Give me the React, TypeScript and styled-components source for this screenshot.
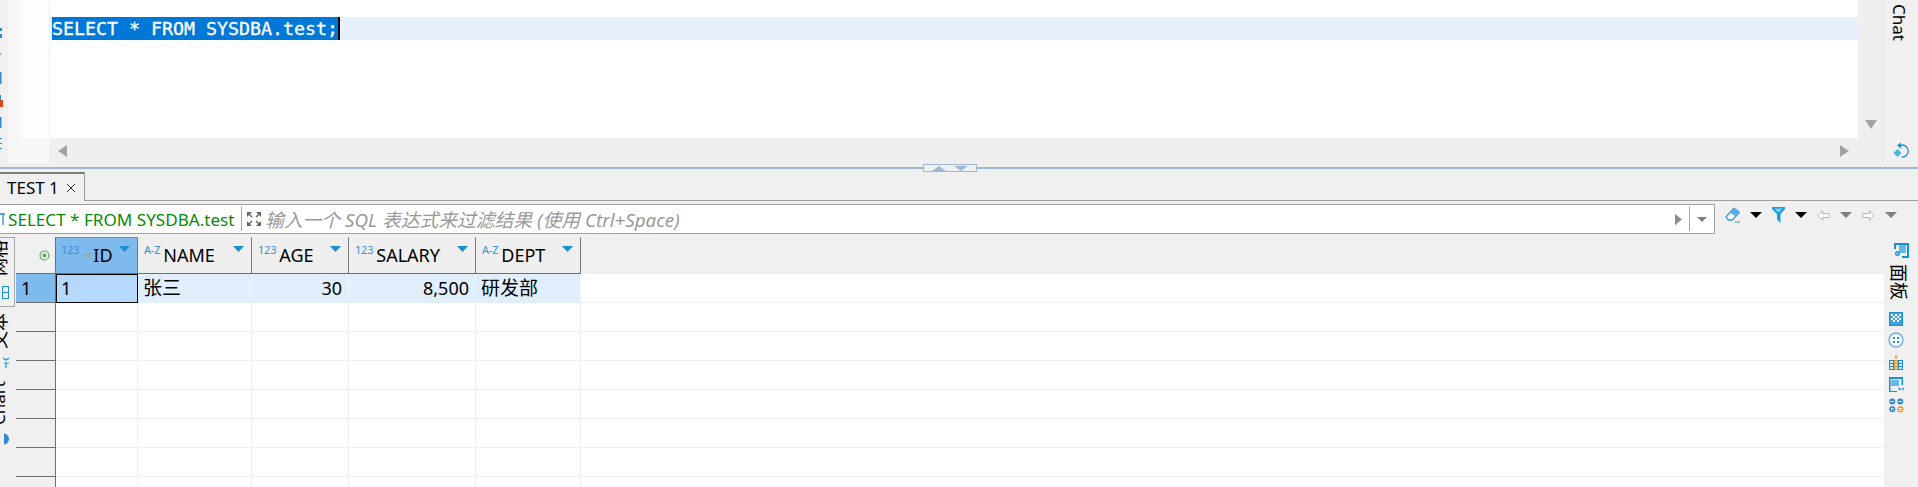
import styled, { createGlobalStyle } from 'styled-components'

const UI_FONT = '"Noto Sans", "Noto Sans CJK SC", sans-serif'
const BLUE = '#1a8fd6'
const GRAY_TRI = '#7f7f7f'

const columns = [
  { name: 'ID', width: 82, kind: '123', value: '1', right: false, cjk: false },
  { name: 'NAME', width: 114, kind: 'A-Z', value: '张三', right: false, cjk: true },
  { name: 'AGE', width: 97, kind: '123', value: '30', right: true, cjk: false },
  { name: 'SALARY', width: 127, kind: '123', value: '8,500', right: true, cjk: false },
  { name: 'DEPT', width: 105, kind: 'A-Z', value: '研发部', right: false, cjk: true },
]

const Global = createGlobalStyle`
  html, body {
    margin: 0;
    background: #f0f0f0;
  }
  * {
    box-sizing: border-box;
  }
`

const Page = styled.div`
  width: 1918px;
  height: 487px;
  overflow: hidden;
  display: flex;
  flex-direction: column;
  background: #f0f0f0;
  color: #000;
  font-family: ${UI_FONT};
`

const EditorPane = styled.section`
  height: 167px;
  display: flex;
`

const EditorEdge = styled.div`
  width: 8px;
  flex: none;
`

const EditorMain = styled.div`
  flex: 1;
  height: 163px;
  display: grid;
  grid-template-columns: 42px 1fr 26px;
  grid-template-rows: 138px 25px;
  background: #f7f7f7;
`

const Gutter = styled.div`
  margin-left: 12px;
  background: #fdfdfd;
  border-right: 1px solid #f0f0f0;
`

const EditorText = styled.div`
  background: #fff;
  padding-top: 17px;
  overflow: hidden;
`

const ActiveLine = styled.div`
  height: 23px;
  background: #e6f1fd;
  display: flex;
  align-items: stretch;
  padding-left: 2px;
`

const Selection = styled.span`
  width: 286px;
  background: #0078d7;
  color: #fff;
  font-family: 'DejaVu Sans Mono', monospace;
  font-size: 18.27px;
  line-height: 23px;
  white-space: pre;
  -webkit-text-stroke: 0.3px #fff;
`

const Caret = styled.span`
  width: 2px;
  background: #000;
`

const ScrollV = styled.div`
  grid-row: 1 / 3;
  grid-column: 3;
  background: #efefef;
  display: flex;
  justify-content: center;
  padding-top: 120px;
  border-right: 1px solid #e6e6e6;
`

const ScrollH = styled.div`
  grid-column: 2;
  grid-row: 2;
  background: #efefef;
  display: flex;
  justify-content: space-between;
  align-items: center;
  padding: 0 9px 0 8px;
`

const GutterFoot = styled.div`
  grid-column: 1;
  grid-row: 2;
`

const ChatRail = styled.aside`
  width: 34px;
  flex: none;
  height: 163px;
  display: flex;
  flex-direction: column;
  align-items: center;
  justify-content: space-between;
  padding: 4px 0 3px;
`

const SideLabel = styled.span<{ $size?: number }>`
  writing-mode: vertical-rl;
  text-orientation: sideways;
  font-size: ${({ $size }) => $size ?? 18}px;
  line-height: 20px;
  white-space: nowrap;
`

// the left tabs read bottom to top, the right ones top to bottom
const LeftLabel = styled(SideLabel)`
  transform: rotate(180deg);
`

const ChatLabel = styled(SideLabel)`
  margin-right: 5px;
`

const PanelLabel = styled(SideLabel)`
  margin-bottom: 6px;
`

const Sash = styled.div`
  height: 2px;
  flex: none;
  display: flex;
  align-items: center;
  background: #9fb9d4;
  justify-content: center;
  padding-right: 18px;
`

const SashGrip = styled.div`
  width: 54px;
  height: 8px;
  background: #f0f0f0;
  border: 1px solid #9fb9d4;
  display: flex;
  align-items: center;
  justify-content: center;
  gap: 8px;
`

const TabStrip = styled.div`
  height: 32px;
  flex: none;
  padding-top: 3px;
  border-bottom: 1px solid #a0a0a0;
  display: flex;
`

const Tab = styled.div`
  width: 85px;
  height: 29px;
  border-top: 2px solid #7d7d7d;
  border-right: 1px solid #a0a0a0;
  background: #f0f0f0;
  display: flex;
  align-items: center;
  padding-left: 7px;
  gap: 7px;
  font-size: 17px;
`

const FilterRow = styled.div`
  height: 36px;
  flex: none;
  display: flex;
  align-items: flex-start;
  padding-top: 3px;
`

const FilterBox = styled.div`
  width: 1715px;
  height: 30px;
  flex: none;
  display: flex;
  align-items: center;
  background: #fff;
  border: 1px solid #a0a0a0;
  border-left: none;
`

const QueryLabel = styled.span`
  flex: none;
  width: 233px;
  color: #0a8a0a;
  font-size: 17.1px;
  white-space: nowrap;
`

const Divider = styled.span`
  width: 1px;
  height: 24px;
  background: #a6a6a6;
  flex: none;
`

const Placeholder = styled.span`
  flex: 1;
  padding-left: 3px;
  color: #9a9a9a;
  font-size: 18.8px;
  font-style: italic;
  white-space: nowrap;
`

const FilterEnd = styled.div`
  flex: none;
  display: flex;
  align-items: center;
  gap: 7px;
  padding: 0 7px 0 0;
`

const Toolbar = styled.div`
  display: flex;
  align-items: center;
  gap: 10px;
  padding: 3px 0 0 10px;
`

const Results = styled.div`
  flex: 1;
  min-height: 0;
  display: flex;
`

const LeftRail = styled.aside`
  width: 16px;
  flex: none;
  display: flex;
  flex-direction: column;
  overflow: hidden;
`

const RailGroup = styled.div`
  width: 15px;
  height: 70px;
  flex: none;
  border: 1px solid #a8a8a8;
  border-left: none;
  display: flex;
  flex-direction: column;
  align-items: flex-end;
  overflow: hidden;
  padding: 2px 5px 0 0;
  margin-bottom: 6px;
`

const RailItem = styled.div<{ $top?: number }>`
  display: flex;
  justify-content: flex-end;
  width: 15px;
  padding-right: 6px;
  margin-top: ${({ $top }) => $top ?? 0}px;
  overflow: hidden;
  flex: none;
`

const Grid = styled.div`
  flex: 1;
  display: flex;
  flex-direction: column;
  min-width: 0;
`

const HeaderRow = styled.div`
  height: 37px;
  flex: none;
  display: flex;
`

const BodyRow = styled.div`
  height: 29px;
  flex: none;
  display: flex;
  background: #fff;
`

const CornerCell = styled.div`
  width: 40px;
  flex: none;
  display: flex;
  align-items: center;
  justify-content: flex-end;
  padding-right: 5px;
  border-right: 1px solid #6f6f6f;
  border-bottom: 1px solid #6f6f6f;
`

const RowHead = styled.div<{ $active?: boolean }>`
  width: 40px;
  flex: none;
  padding-left: 5px;
  font-size: 18px;
  line-height: 28px;
  background: ${({ $active }) => ($active ? '#7fbaec' : '#f0f0f0')};
  border-right: 1px solid #6f6f6f;
  border-bottom: 1px solid #6f6f6f;
`

const HeadCell = styled.div<{ $selected?: boolean }>`
  position: relative;
  height: 37px;
  flex: none;
  display: flex;
  align-items: center;
  padding-left: ${({ $selected }) => ($selected ? '5px' : '6px')};
  background: ${({ $selected }) => ($selected ? '#7fbaec' : '#efefef')};
  border-top: 1px solid ${({ $selected }) => ($selected ? '#8a8a8a' : 'transparent')};
  border-right: 1px solid #777;
  border-bottom: 1px solid #6f6f6f;
`

const TypeTag = styled.span`
  font-size: 11px;
  line-height: 10px;
  color: #3c8fd4;
  align-self: flex-start;
  margin-top: 7px;
  margin-right: 3px;
  letter-spacing: -0.2px;
`

const ColumnName = styled.span`
  font-size: 18px;
  margin-top: -2px;
`

const SortMark = styled.svg`
  position: absolute;
  top: 8px;
  right: 7px;
`

const HeadFill = styled.div`
  flex: 1;
`

const Cell = styled.div<{ $active?: boolean; $focused?: boolean; $right?: boolean; $cjk?: boolean }>`
  flex: none;
  font-size: ${({ $cjk }) => ($cjk ? '19px' : '18px')};
  line-height: 28px;
  padding: 0 ${({ $right }) => ($right ? '6px' : '0')} 0 5px;
  text-align: ${({ $right }) => ($right ? 'right' : 'left')};
  background: ${({ $active, $focused }) => ($focused ? '#b5d8fb' : $active ? '#e1effd' : '#fff')};
  border-right: 1px solid ${({ $active }) => ($active ? '#ecf4fd' : '#f0f0f0')};
  border-bottom: 1px solid ${({ $active }) => ($active ? '#e1effd' : '#f0f0f0')};
  outline: ${({ $focused }) => ($focused ? '1px solid #000' : 'none')};
  outline-offset: -1px;
`

const RowFill = styled.div`
  flex: 1;
  border-bottom: 1px solid #f0f0f0;
`

const RightRail = styled.aside`
  width: 34px;
  flex: none;
  display: flex;
  flex-direction: column;
  align-items: flex-start;
  padding: 6px 0 0 5px;
  gap: 6px;
`

const RailIcon = styled.div<{ $left?: number }>`
  display: flex;
  margin-left: ${({ $left }) => $left ?? 0}px;
`

function Tri({ color = '#000', w = 12, h = 6 }: { color?: string; w?: number; h?: number }) {
  return (
    <svg width={w} height={h} viewBox="0 0 11 6" preserveAspectRatio="none">
      <path d="M0 0h11L5.500 6z" fill={color} />
    </svg>
  )
}

function TopEdgeMarks() {
  return (
    <svg width="8" height="163" viewBox="0 0 8 163">
      <path d="M0 28h2v3H0zM0 34h2v4H0zM0 72h1.500v12H0zM0 95h1v5H0zM0 117h1.500v11H0zM0 138h2v1H0zM0 143h2v1H0zM0 148h2v1H0z" fill="#2f8ad6" />
      <rect y="53" width="1.500" height="2" fill="#aaa" />
      <rect y="100" width="3" height="7" fill="#d9471f" />
    </svg>
  )
}

function RestoreIcon() {
  return (
    <svg width="18" height="18" viewBox="0 0 18 18">
      <path d="M8 3.500a6 6 0 1 1 1.500 11.500" fill="none" stroke="#1a8fd6" strokeWidth="1.300" />
      <path d="M9 0.500v6L5 3.500z" fill="#1a8fd6" />
      <path d="M5.500 7l4 4-4 4-4-4z" fill="#4ab3e8" />
    </svg>
  )
}

function KeyIcon() {
  return (
    <svg width="9" height="5" viewBox="0 0 9 5" style={{ alignSelf: 'center', marginRight: 2, marginLeft: 0 }}>
      <path d="M0 2.500h5" stroke="#e8902a" strokeWidth="1" />
      <circle cx="6.500" cy="2.500" r="1.800" fill="none" stroke="#e8902a" />
    </svg>
  )
}

function QueryMark() {
  return (
    <svg width="8" height="13" viewBox="0 0 8 13" style={{ flex: 'none' }}>
      <path d="M0 1h5M3 1v11" fill="none" stroke="#2f8ad6" strokeWidth="1.300" />
    </svg>
  )
}

function ExpandIcon() {
  return (
    <svg width="16" height="16" viewBox="0 0 16 16" style={{ marginLeft: 4, flex: 'none' }}>
      <path d="M1 6V1h5L4 3l2.500 2.500-1 1L3 4zM15 6V1h-5l2 2-2.500 2.500 1 1L13 4zM1 10v5h5l-2-2 2.500-2.500-1-1L3 12zM15 10v5h-5l2-2-2.500-2.500 1-1L13 12z" fill="#666" />
    </svg>
  )
}

function EraserIcon() {
  return (
    <svg width="15" height="16" viewBox="0 0 15 16">
      <path d="M1 10l7-8q1-1 2 0l3.500 2.500q1 1 0 2L7 13H3.500z" fill="#fff" stroke="#3b94dc" strokeWidth="1.300" />
      <path d="M5 5.500L8 2q1-1 2 0l3.500 2.500q1 1 0 2L10.500 9.500z" fill="#5aaee8" />
      <path d="M10 15h5" stroke="#3b94dc" />
    </svg>
  )
}

function FunnelIcon() {
  return (
    <svg width="13" height="16" viewBox="0 0 13 16">
      <path d="M0 0h13v2L8.500 7v9L5 12.500V7L0 2z" fill="#18a0dc" />
      <path d="M2.500 1.500h8L7.500 5h-2z" fill="#7fd0f0" />
    </svg>
  )
}

function ArrowIcon({ flip }: { flip?: boolean }) {
  return (
    <svg width="13" height="11" viewBox="0 0 13 11" style={flip ? { transform: 'scaleX(-1)' } : undefined}>
      <path d="M0.700 5.500L5.500 0.800v2.700h6.800v4H5.500v2.700z" fill="#fff" stroke="#b4b4b4" />
    </svg>
  )
}

function PanelIcon() {
  return (
    <svg width="15" height="15" viewBox="0 0 15 15">
      <path d="M1 6V1h13v13H8" fill="none" stroke="#1a8fd6" strokeWidth="2" />
      <rect x="5" y="2" width="7" height="8" fill="#62b8ea" />
      <circle cx="3.500" cy="10.500" r="2.500" fill="#1a8fd6" />
      <circle cx="3.500" cy="10.500" r="1" fill="#fff" />
    </svg>
  )
}

function CheckerIcon() {
  return (
    <svg width="14" height="14" viewBox="0 0 14 14">
      <rect x="0.500" y="0.500" width="13" height="13" fill="#3aa3e0" stroke="#1a8fd6" />
      <path d="M2 2h2v2H2zM6 2h2v2H6zM10 2h2v2h-2zM4 4h2v2H4zM8 4h2v2H8zM2 6h2v2H2zM6 6h2v2H6zM10 6h2v2h-2zM4 8h2v2H4zM8 8h2v2H8z" fill="#fff" />
    </svg>
  )
}

function DotsIcon() {
  return (
    <svg width="16" height="16" viewBox="0 0 16 16">
      <circle cx="8" cy="8" r="7" fill="#f4f8fc" stroke="#6aa8de" strokeWidth="1.300" />
      <path d="M5 5h2v2H5zM9 5h2v2H9zM5 9h2v2H5zM9 9h2v2H9z" fill="#3b84c8" />
    </svg>
  )
}

function ColumnIcon() {
  return (
    <svg width="14" height="17" viewBox="0 0 14 15">
      <path d="M0 5h14v10H0z" fill="#1a8fd6" />
      <path d="M1 6h3v2H1zM10 6h3v2h-3zM1 9h3v2H1zM10 9h3v2h-3zM1 12h3v2H1zM10 12h3v2h-3z" fill="#d4ecfa" />
      <path d="M5 5h4v10H5z" fill="#f28c1e" />
      <path d="M6 6h2v2H6zM6 9h2v2H6zM6 12h2v2H6z" fill="#fde3c4" />
      <path d="M7 0v4M5.500 2h3" stroke="#f28c1e" />
    </svg>
  )
}

function ResizeIcon() {
  return (
    <svg width="15" height="15" viewBox="0 0 15 15">
      <path d="M0 0h14v2H0zM0 2h1.500v12H8v1H0zM12.500 2H14v6h-1.500z" fill="#1a8fd6" />
      <rect x="2" y="3" width="8" height="6" fill="#62b8ea" />
      <path d="M10 12h5M10 10.500v3M15 10.500v3" stroke="#1a8fd6" />
    </svg>
  )
}

function ActionsIcon() {
  return (
    <svg width="15" height="15" viewBox="0 0 15 15">
      <circle cx="3.300" cy="3.500" r="3" fill="#3b84c8" />
      <path d="M1.500 3.500h3.600" stroke="#fff" />
      <circle cx="11.300" cy="3.500" r="3" fill="#3b84c8" />
      <path d="M9.500 3.500h3.600" stroke="#fff" />
      <circle cx="3.300" cy="11.300" r="3" fill="#3b84c8" />
      <path d="M2 10l2.600 2.600M4.600 10L2 12.600" stroke="#fff" />
      <circle cx="11.300" cy="11.300" r="3" fill="#f28c1e" />
      <path d="M9.500 10.500h3.600M9.500 12.300h3.600" stroke="#fff" />
    </svg>
  )
}

function HeaderRowView() {
  return (
    <HeaderRow>
      <CornerCell>
        <svg width="11" height="11" viewBox="0 0 11 11">
          <circle cx="5.500" cy="5.500" r="4.500" fill="none" stroke="#5cb25c" strokeWidth="1.200" />
          <circle cx="5.500" cy="5.500" r="2" fill="#5cb25c" />
        </svg>
      </CornerCell>
      {columns.map((col, index) => (
        <HeadCell key={col.name} $selected={index === 0} style={{ width: col.width }}>
          <TypeTag>{col.kind}</TypeTag>
          {index === 0 && <KeyIcon />}
          <ColumnName>{col.name}</ColumnName>
          <SortMark width="11" height="6" viewBox="0 0 11 6">
            <path d="M0 0h11L5.500 6z" fill={BLUE} />
          </SortMark>
        </HeadCell>
      ))}
      <HeadFill />
    </HeaderRow>
  )
}

export default function App() {
  const emptyRows = [0, 1, 2, 3, 4, 5, 6]

  return (
    <Page>
      <Global />
      <EditorPane>
        <EditorEdge>
          <TopEdgeMarks />
        </EditorEdge>
        <EditorMain>
          <Gutter />
          <EditorText>
            <ActiveLine>
              <Selection>SELECT * FROM SYSDBA.test;</Selection>
              <Caret />
            </ActiveLine>
          </EditorText>
          <ScrollV>
            <Tri color="#a3a3a3" w={12} h={9} />
          </ScrollV>
          <GutterFoot />
          <ScrollH>
            <svg width="9" height="12" viewBox="0 0 9 11" preserveAspectRatio="none">
              <path d="M9 0v11L0 5.500z" fill="#a3a3a3" />
            </svg>
            <svg width="9" height="12" viewBox="0 0 9 11" preserveAspectRatio="none">
              <path d="M0 0v11l9-5.500z" fill="#a3a3a3" />
            </svg>
          </ScrollH>
        </EditorMain>
        <ChatRail>
          <ChatLabel $size={17}>Chat</ChatLabel>
          <RestoreIcon />
        </ChatRail>
      </EditorPane>

      <Sash>
        <SashGrip>
          <svg width="14" height="5" viewBox="0 0 14 5">
            <path d="M0 5h14L7 0z" fill="#9fb9d4" />
          </svg>
          <svg width="14" height="5" viewBox="0 0 14 5">
            <path d="M0 0h14L7 5z" fill="#9fb9d4" />
          </svg>
        </SashGrip>
      </Sash>

      <TabStrip>
        <Tab>
          TEST 1
          <svg width="10" height="10" viewBox="0 0 10 10">
            <path d="M1 1l8 8M9 1L1 9" stroke="#333" strokeWidth="1" />
          </svg>
        </Tab>
      </TabStrip>

      <FilterRow>
        <FilterBox>
          <QueryMark />
          <QueryLabel>SELECT * FROM SYSDBA.test</QueryLabel>
          <Divider />
          <ExpandIcon />
          <Placeholder>输入一个 SQL 表达式来过滤结果 (使用 Ctrl+Space)</Placeholder>
          <FilterEnd>
            <svg width="7" height="11" viewBox="0 0 7 11">
              <path d="M0 0v11l7-5.500z" fill="#8c8c8c" />
            </svg>
            <Divider />
            <Tri color={GRAY_TRI} w={10} h={5} />
          </FilterEnd>
        </FilterBox>
        <Toolbar>
          <EraserIcon />
          <Tri />
          <FunnelIcon />
          <Tri />
          <ArrowIcon />
          <Tri color={GRAY_TRI} />
          <ArrowIcon flip />
          <Tri color={GRAY_TRI} />
        </Toolbar>
      </FilterRow>

      <Results>
        <LeftRail>
          <RailGroup>
            <LeftLabel>网格</LeftLabel>
            <svg width="7" height="13" viewBox="0 0 7 13" style={{ marginTop: 10, flex: 'none' }}>
              <path d="M0 .500h7M0 6.500h7M0 12.500h7M6.500 0v13M.500 0v13" fill="none" stroke={BLUE} />
            </svg>
          </RailGroup>
          <RailItem>
            <LeftLabel>文本</LeftLabel>
          </RailItem>
          <RailItem $top={8}>
            <svg width="6" height="12" viewBox="0 0 6 12">
              <path d="M0 1l3 2 3-2M1 6h5M3 6v5" fill="none" stroke={BLUE} strokeWidth="1.200" />
            </svg>
          </RailItem>
          <RailItem $top={12}>
            <LeftLabel $size={17}>Chart</LeftLabel>
          </RailItem>
          <RailItem $top={8}>
            <svg width="5" height="12" viewBox="0 0 5 12">
              <circle cx="-0.500" cy="6" r="5.500" fill="#2f8ad6" />
            </svg>
          </RailItem>
        </LeftRail>

        <Grid>
          <HeaderRowView />
          <BodyRow>
            <RowHead $active>1</RowHead>
            {columns.map((col, index) => (
              <Cell
                key={col.name}
                $active
                $focused={index === 0}
                $right={col.right}
                $cjk={col.cjk}
                style={{ width: col.width }}
              >
                {col.value}
              </Cell>
            ))}
            <RowFill />
          </BodyRow>
          {emptyRows.map((row) => (
            <BodyRow key={row}>
              <RowHead />
              {columns.map((col) => (
                <Cell key={col.name} style={{ width: col.width }} />
              ))}
              <RowFill />
            </BodyRow>
          ))}
        </Grid>

        <RightRail>
          <RailIcon $left={5}>
            <PanelIcon />
          </RailIcon>
          <PanelLabel>面板</PanelLabel>
          <CheckerIcon />
          <RailIcon $left={-1}>
            <DotsIcon />
          </RailIcon>
          <ColumnIcon />
          <ResizeIcon />
          <ActionsIcon />
        </RightRail>
      </Results>
    </Page>
  )
}
